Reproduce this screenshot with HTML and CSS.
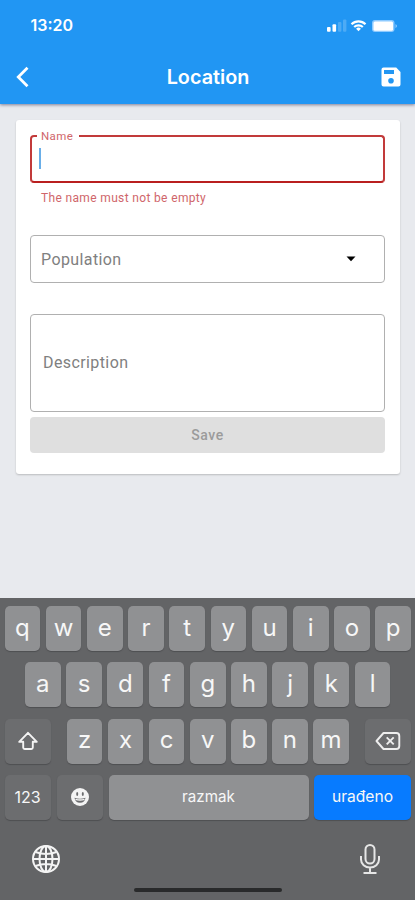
FILE: index.html
```html
<!DOCTYPE html>
<html lang="hr">
<head>
<meta charset="utf-8">
<meta name="viewport" content="width=device-width, initial-scale=1">
<title>Location</title>
<link rel="stylesheet" href="styles.css">
</head>
<body>
<div class="screen">
  <header class="header">
    <div class="status">
      <span class="time">13:20</span>
      <svg class="indicators" width="74" height="16" viewBox="0 0 74 16" aria-hidden="true">
        <g fill="#fff">
          <rect x="1" y="10" width="3.6" height="4.8" rx="1"/>
          <rect x="6.5" y="7.3" width="3.6" height="7.5" rx="1"/>
          <rect x="12" y="5" width="3.4" height="9.8" rx="1" opacity=".2"/>
          <rect x="17" y="2.5" width="3.4" height="12.3" rx="1" opacity=".2"/>
          <path d="M32.5 14.200l-2.400-2.500a3.500 3.500 0 0 1 4.800 0z"/>
        </g>
        <path d="M25.500 7.200a10 10 0 0 1 14 0M28.200 10a6.300 6.300 0 0 1 8.600 0" fill="none" stroke="#fff" stroke-width="2.200"/>
        <rect x="46" y="3" width="22.500" height="12" rx="3" fill="#8dcaff"/>
        <rect x="47.500" y="4.500" width="19.500" height="9.200" rx="1.500" fill="#fff"/>
        <path d="M69.500 7q3 2 0 4.200z" fill="#8dcaff"/>
      </svg>
    </div>
    <div class="toolbar">
      <svg class="back" width="14" height="22" viewBox="0 0 14 22"><path d="M12.500 1.800L3.300 11l9.200 9.200" fill="none" stroke="#fff" stroke-width="2.800"/></svg>
      <h1 class="title">Location</h1>
      <svg class="disk" width="20" height="20" viewBox="0 0 20 20"><path fill="#fff" fill-rule="evenodd" d="M2.500.5h12.700L19.500 5v12.500a2 2 0 0 1-2 2h-15a2 2 0 0 1-2-2v-15a2 2 0 0 1 2-2zM3 3v4h10V3zM10 11a2.800 2.800 0 1 0 0 5.600A2.800 2.800 0 0 0 10 11z"/></svg>
    </div>
  </header>
  <main class="content">
    <form class="card">
      <div class="field name"><span class="label">Name</span><span class="caret"></span></div>
      <p class="error">The name must not be empty</p>
      <div class="field population"><span>Population</span><svg width="10" height="6" viewBox="0 0 10 6"><path d="M.5.5h9L5 5.200z"/></svg></div>
      <div class="field description"><span>Description</span></div>
      <button class="save" type="button" disabled>Save</button>
    </form>
  </main>
  <section class="keyboard">
    <div class="row">
      <span class="key">q</span><span class="key">w</span><span class="key">e</span><span class="key">r</span><span class="key">t</span><span class="key">y</span><span class="key">u</span><span class="key">i</span><span class="key">o</span><span class="key">p</span>
    </div>
    <div class="row second">
      <span class="key">a</span><span class="key">s</span><span class="key">d</span><span class="key">f</span><span class="key">g</span><span class="key">h</span><span class="key">j</span><span class="key">k</span><span class="key">l</span>
    </div>
    <div class="row third">
      <span class="key dark"><svg width="22" height="20" viewBox="0 0 22 20"><path d="M11 1.800L2.200 10.800h4v5.700q0 1.500 1.500 1.500h6.600q1.500 0 1.500-1.500v-5.700h4z" fill="none" stroke="#f4f4f4" stroke-width="1.900" stroke-linejoin="round"/></svg></span>
      <div class="letters"><span class="key">z</span><span class="key">x</span><span class="key">c</span><span class="key">v</span><span class="key">b</span><span class="key">n</span><span class="key">m</span></div>
      <span class="key dark"><svg width="26" height="20" viewBox="0 0 26 20"><path d="M8.500 2h12.800q3 0 3 3v10q0 3-3 3H8.500L1.500 10z" fill="none" stroke="#eee" stroke-width="1.900" stroke-linejoin="round"/><path d="M11.700 6.400l7 7m0-7l-7 7" stroke="#eee" stroke-width="1.900"/></svg></span>
    </div>
    <div class="row fourth">
      <span class="key dark digits">123</span>
      <span class="key dark"><svg width="20" height="20" viewBox="0 0 20 20"><circle cx="10" cy="10" r="9" fill="#f4f4f4"/><g fill="#6b6c6e"><ellipse cx="7.200" cy="7" rx="1" ry="1.900"/><ellipse cx="12.800" cy="7" rx="1" ry="1.900"/><path d="M4.500 10.800q5.500 1.800 11 0-.7 5-5.500 5t-5.500-5z"/></g><path d="M5.500 12.300q4.500 1.300 9 0" fill="none" stroke="#f4f4f4" stroke-width="1.400"/></svg></span>
      <span class="key space">razmak</span>
      <span class="key done">urađeno</span>
    </div>
    <div class="tools">
      <svg width="30" height="30" viewBox="0 0 30 30" fill="none" stroke="#f4f4f4" stroke-width="2"><circle cx="15" cy="15" r="13"/><ellipse cx="15" cy="15" rx="6.500" ry="13"/><path d="M15 2v26M2 15h26M4.500 8q10.500 4 21 0M4.500 22q10.500-4 21 0"/></svg>
      <svg width="22" height="32" viewBox="0 0 22 32" fill="none" stroke="#e6e6e6" stroke-width="2"><rect x="6.500" y="2" width="9" height="18.500" rx="4.500"/><path d="M2 13v3.500a9 8 0 0 0 18 0V13M11 24.500v5M4.500 30h13"/></svg>
    </div>
    <div class="home"></div>
  </section>
</div>
</body>
</html>
```
FILE: styles.css
```css
* { box-sizing: border-box; }
body { margin: 0; font-family: Inter, "Liberation Sans", sans-serif; }
.screen { width: 415px; height: 900px; display: flex; flex-direction: column; background: #e8eaee; overflow: hidden; }
.header { height: 104px; flex: none; background: #2196f3; color: #fff; box-shadow: 0 1px 3px rgba(40,40,80,.55); }
.status { height: 50px; padding: 17px 15px 0 30.500px; display: flex; justify-content: space-between; align-items: flex-start; }
.time { font-size: 16px; line-height: 17px; font-weight: 600; }
.toolbar { height: 54px; padding: 0 14px 0 15px; display: grid; grid-template-columns: 20px 1fr 20px; align-items: center; }
.title { margin: 0; font-size: 19.800px; line-height: 24px; font-weight: 600; text-align: center; }
.content { flex: 1; padding: 16px 15px 0 16px; }
.card { height: 354px; padding: 15px 15px 0 14px; background: #fff; border-radius: 3px; box-shadow: 0 1px 2px rgba(0,0,0,.2); font-family: Roboto, sans-serif; letter-spacing: .4px; }
.field { border: 1px solid #b0b0b0; border-radius: 4px; color: #808080; font-size: 16px; display: flex; align-items: center; }
.name { height: 48px; border: 2px solid #c23a3a; border-bottom-color: #b91f1f; position: relative; padding-left: 7px; }
.label { position: absolute; left: 5px; top: -8px; padding: 0 6px 0 4px; background: #fff; color: #d0666b; font-size: 11.500px; line-height: 14px; }
.caret { width: 2px; height: 21px; margin-top: -1px; background: #69aee8; }
.error { margin: 8px 0 0 11px; height: 14px; font-size: 12px; line-height: 14px; color: #d0666b; letter-spacing: .35px; }
.population { height: 48px; margin-top: 30px; padding: 0 28px 0 10px; justify-content: space-between; }
.description { height: 98px; margin-top: 31px; padding: 0 0 2px 12px; }
.save { display: block; width: 100%; height: 36px; margin-top: 5px; padding: 0; border: 0; border-radius: 4px; background: #dfdfdf; color: #9b9b9b; font: 500 14px Roboto, sans-serif; letter-spacing: .6px; }
.keyboard { height: 302px; flex: none; background: #636466; padding: 8px 4px 0 4.500px; display: flex; flex-direction: column; gap: 11.300px; }
.row { display: flex; height: 45px; gap: 5.500px; }
.second { padding: 0 20.500px 0 20.500px; }
.third { justify-content: space-between; }
.letters { display: flex; gap: 5.500px; width: 282px; }
.key { flex: 1; display: flex; align-items: center; justify-content: center; border-radius: 5px; background: #909193; box-shadow: 0 1px 1px #4e4f51; color: #f7f7f7; font-size: 24px; line-height: 30px; padding-bottom: 2px; }
.dark { flex: none; width: 46px; background: #6c6d6f; padding: 0; }
.fourth .digits { font-size: 16px; }
.fourth .dark + .dark { margin-left: 1px; }
.space, .done { font-size: 15.200px; padding-bottom: 1px; }
.done { flex: none; width: 97px; background: #077bff; font-size: 15.600px; }
.tools { display: flex; justify-content: space-between; align-items: center; height: 32px; margin-top: 12px; padding: 0 30px 0 26px; }
.home { width: 148px; height: 4px; border-radius: 2px; background: #292a2b; align-self: center; margin-top: 2px; }
```
